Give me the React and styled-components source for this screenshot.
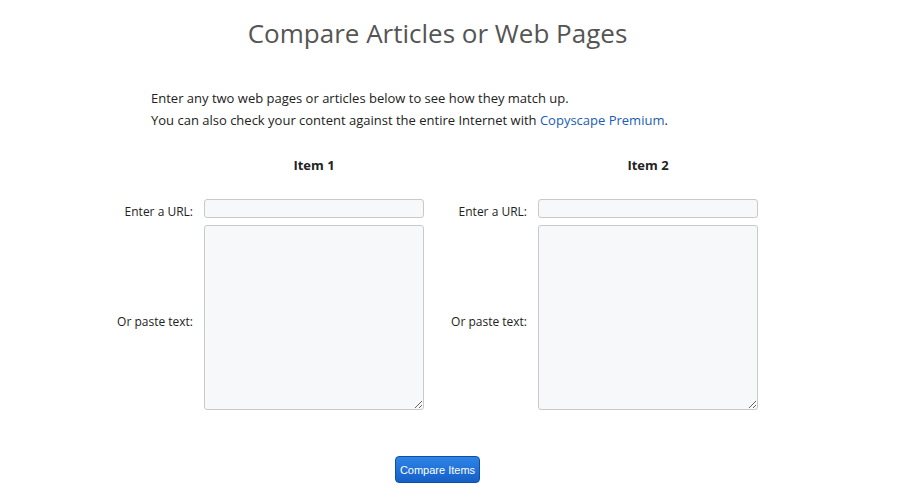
import React from "react";
import styled, { createGlobalStyle } from "styled-components";

const Global = createGlobalStyle`
  html, body { margin: 0; padding: 0; background: #fff; }
  body { font-family: "Open Sans", "Liberation Sans", sans-serif; color: #222; }
`;

const Page = styled.div`
  width: 875px;
  padding-top: 14px;
  box-sizing: border-box;
`;

const Title = styled.h1`
  margin: 0;
  text-align: center;
  font-size: 26px;
  line-height: 38px;
  font-weight: 400;
  color: #555;
`;

const Intro = styled.div`
  margin: 35px 0 0 151px;
  font-size: 13px;
  line-height: 22px;
  color: #222;
`;

const Link = styled.a`
  color: #1a5db4;
  text-decoration: none;
`;

const Items = styled.div`
  display: flex;
  margin: 24px 0 0 90px;
`;

const Item = styled.div`
  display: grid;
  width: 334px;
  grid-template-columns: 103px 220px;
  column-gap: 11px;
  row-gap: 7px;
  align-items: center;
`;

const Heading = styled.div`
  grid-column: 2;
  text-align: center;
  font-weight: 700;
  font-size: 13px;
  line-height: 20px;
  margin-bottom: 17px;
`;

const Label = styled.label`
  text-align: right;
  font-size: 12px;
  line-height: 18px;
  padding-top: ${(p) => p.$shift || 0}px;
  margin-bottom: -${(p) => p.$shift || 0}px;
`;

const UrlInput = styled.input`
  box-sizing: border-box;
  width: 220px;
  height: 19px;
  margin: 0;
  border: 1px solid #c9c9c9;
  border-radius: 3px;
  background: #f7f8f9;
  outline: none;
`;

const TextBox = styled.textarea`
  box-sizing: border-box;
  display: block;
  width: 220px;
  height: 185px;
  margin: 0;
  border: 1px solid #c9c9c9;
  border-radius: 3px;
  background: #f7f8f9;
  outline: none;
  resize: both;
`;

const Actions = styled.div`
  display: flex;
  justify-content: center;
  margin-top: 46px;
`;

const Button = styled.button`
  width: 85px;
  height: 27px;
  padding: 0;
  border: 1px solid #0d4fa8;
  border-radius: 4px;
  background: linear-gradient(#2f84e6, #1560c8);
  color: #fff;
  font-family: "Liberation Sans", Arial, sans-serif;
  font-size: 11px;
  cursor: pointer;
`;

function Column({ n }) {
  return (
    <Item>
      <Heading>Item {n}</Heading>
      <Label $shift={3}>Enter a URL:</Label>
      <UrlInput type="text" />
      <Label $shift={4}>Or paste text:</Label>
      <TextBox />
    </Item>
  );
}

export default function App() {
  return (
    <Page>
      <Global />
      <Title>Compare Articles or Web Pages</Title>
      <Intro>
        Enter any two web pages or articles below to see how they match up.
        <br />
        You can also check your content against the entire Internet with{" "}
        <Link href="#">Copyscape Premium</Link>.
      </Intro>
      <Items>
        <Column n={1} />
        <Column n={2} />
      </Items>
      <Actions>
        <Button>Compare Items</Button>
      </Actions>
    </Page>
  );
}
